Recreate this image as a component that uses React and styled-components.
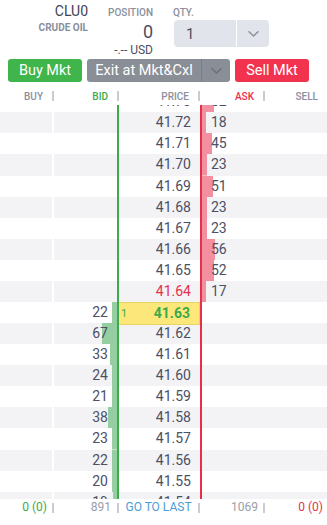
import React from "react";
import styled, { createGlobalStyle } from "styled-components";

const GlobalStyle = createGlobalStyle`
  html, body { margin: 0; padding: 0; background: #fff; }
  body { font-family: Roboto, "Liberation Sans", Arial, sans-serif; -webkit-font-smoothing: antialiased; }
  * { box-sizing: border-box; }
`;

const C = {
  text: "#4b5064",
  label: "#8a8f9d",
  sep: "#c9ccd3",
  rowAlt: "#f3f3f6",
  green: "#3bab4b",
  red: "#e6304b",
  blue: "#4a9ed6",
  bidBar: "#95cea0",
  askBar: "#f2909f",
};

const ROW_H = 21.08;
const BAR_K = 0.225;

const Page = styled.div`
  width: 327px;
  height: 525px;
  overflow: hidden;
  display: flex;
  flex-direction: column;
  background: #fff;
`;

const Top = styled.div`
  display: flex;
  height: 59px;
  flex: none;
`;

const InfoCol = styled.div`
  display: flex;
  flex-direction: column;
  align-items: ${(p) => (p.$left ? "flex-start" : "flex-end")};
  width: ${(p) => p.$w}px;
  margin-left: ${(p) => p.$ml || 0}px;
  padding-top: ${(p) => p.$pt}px;
`;

const Symbol = styled.div`
  font-size: 14px;
  line-height: 16px;
  color: #3e4357;
`;

const SmallLabel = styled.div`
  font-size: 10px;
  line-height: 12px;
  font-weight: ${(p) => p.$weight || 500};
  color: ${C.label};
  margin-top: ${(p) => p.$mt || 0}px;
`;

const PosValue = styled.div`
  font-size: 18px;
  line-height: 20px;
  color: ${C.text};
  margin-top: 3px;
`;

const PosUsd = styled.div`
  font-size: 12px;
  line-height: 14px;
  color: ${C.text};
  margin-top: 1px;
`;

const QtyBox = styled.div`
  display: flex;
  width: 95px;
  height: 27px;
  margin-top: 1px;
  margin-left: 1px;
  border-radius: 4px;
  background: #e1e4ea;
  overflow: hidden;
`;

const QtyValue = styled.div`
  flex: 1;
  display: flex;
  align-items: center;
  padding-left: 12px;
  font-size: 15px;
  color: ${C.text};
  border-right: 1px solid #fff;
`;

const QtyArrow = styled.div`
  width: 32px;
  display: flex;
  align-items: center;
  justify-content: center;
`;

const Buttons = styled.div`
  display: flex;
  gap: 5px;
  padding-left: 8px;
  height: 23px;
  flex: none;
`;

const Btn = styled.div`
  width: ${(p) => p.$w}px;
  height: 23px;
  border-radius: 3px;
  background: ${(p) => p.$bg};
  color: #fff;
  font-size: 14.5px;
  display: flex;
  align-items: center;
  justify-content: center;
`;

const SplitBtn = styled.div`
  width: 143px;
  height: 23px;
  border-radius: 3px;
  background: #8a8e96;
  display: flex;
  overflow: hidden;
`;

const SplitMain = styled.div`
  flex: 1;
  display: flex;
  align-items: center;
  justify-content: center;
  color: #fff;
  font-size: 14.5px;
  border-right: 1px solid #787c84;
`;

const SplitArrow = styled.div`
  width: 28px;
  display: flex;
  align-items: center;
  justify-content: center;
`;

const COLS = "54px 65px 81px 65px 62px";

const Header = styled.div`
  display: grid;
  grid-template-columns: ${COLS};
  height: 18px;
  margin-top: 5px;
  flex: none;
`;

const HeadCell = styled.div`
  display: flex;
  align-items: center;
  justify-content: flex-end;
  font-size: 10px;
  font-weight: 500;
  color: ${(p) => p.$color || C.label};
  padding-right: ${(p) => (p.$last ? 9 : 0)}px;
`;

const Sep = styled.span`
  display: inline-block;
  width: 2px;
  height: 10px;
  background: ${C.sep};
  margin-left: ${(p) => p.$gap}px;
`;

const Book = styled.div`
  height: 394px;
  overflow: hidden;
  flex: none;
`;

const BookInner = styled.div`
  margin-top: -13.8px;
`;

const Row = styled.div`
  display: grid;
  grid-template-columns: ${COLS};
  height: ${ROW_H}px;
  background: ${(p) => (p.$alt ? C.rowAlt : "#fff")};
  font-size: 14px;
  line-height: ${ROW_H}px;
  color: ${C.text};
`;

const BuyCell = styled.div`
  border-right: 2px solid #fff;
`;

const BidCell = styled.div`
  border-right: 2px solid ${C.green};
  text-align: right;
  padding-right: 9px;
  background: linear-gradient(${C.bidBar}, ${C.bidBar}) no-repeat right center /
    ${(p) => p.$bar}px 100%;
`;

const PriceCell = styled.div`
  display: flex;
  align-items: center;
  justify-content: space-between;
  padding-right: 9px;
  padding-left: 2px;
  color: ${(p) => p.$color || C.text};
  font-weight: ${(p) => (p.$bold ? 700 : 400)};
  background: ${(p) => (p.$hl ? "#fce87a" : "transparent")};
  border: ${(p) => (p.$hl ? "1px solid #e8d463" : "none")};
  border-left: none;
`;

const MarkerQty = styled.span`
  font-size: 11px;
  font-weight: 400;
  color: ${C.green};
`;

const AskCell = styled.div`
  border-left: 2px solid ${C.red};
  padding-left: 9px;
  background: linear-gradient(${C.askBar}, ${C.askBar}) no-repeat left center /
    ${(p) => p.$bar}px 100%;
`;

const SellCell = styled.div``;

const Footer = styled.div`
  display: grid;
  grid-template-columns: ${COLS};
  height: 17px;
  flex: none;
  font-size: 12px;
  line-height: 17px;
`;

const FootCell = styled.div`
  display: flex;
  align-items: center;
  justify-content: ${(p) => p.$justify || "flex-end"};
  color: ${(p) => p.$color || "#9a9ea9"};
  padding-right: ${(p) => p.$pr || 0}px;
`;

const FootCenter = styled.span`
  flex: 1;
  text-align: center;
`;

const Chevron = ({ color, w = 11, h = 6 }) => (
  <svg width={w} height={h} viewBox="0 0 11 6" fill="none">
    <path d="M1 0.8 L5.5 5 L10 0.8" stroke={color} strokeWidth="1.5" strokeLinecap="round" strokeLinejoin="round" />
  </svg>
);

const rows = [
  { price: "41.73", ask: 52 },
  { price: "41.72", ask: 18 },
  { price: "41.71", ask: 45 },
  { price: "41.70", ask: 23 },
  { price: "41.69", ask: 51 },
  { price: "41.68", ask: 23 },
  { price: "41.67", ask: 23 },
  { price: "41.66", ask: 56 },
  { price: "41.65", ask: 52 },
  { price: "41.64", ask: 17, red: true },
  { price: "41.63", bid: 22, last: true },
  { price: "41.62", bid: 67 },
  { price: "41.61", bid: 33 },
  { price: "41.60", bid: 24 },
  { price: "41.59", bid: 21 },
  { price: "41.58", bid: 38 },
  { price: "41.57", bid: 23 },
  { price: "41.56", bid: 22 },
  { price: "41.55", bid: 20 },
  { price: "41.54", bid: 19 },
];

export default function App() {
  return (
    <>
      <GlobalStyle />
      <Page>
        <Top>
          <InfoCol $w={88} $pt={3}>
            <Symbol>CLU0</Symbol>
            <SmallLabel $weight={700} $mt={2.5}>CRUDE OIL</SmallLabel>
          </InfoCol>
          <InfoCol $w={65} $pt={7}>
            <SmallLabel>POSITION</SmallLabel>
            <PosValue>0</PosValue>
            <PosUsd>-.-- USD</PosUsd>
          </InfoCol>
          <InfoCol $left $w={100} $ml={20} $pt={7}>
            <SmallLabel>QTY.</SmallLabel>
            <QtyBox>
              <QtyValue>1</QtyValue>
              <QtyArrow>
                <Chevron color="#8d919c" />
              </QtyArrow>
            </QtyBox>
          </InfoCol>
        </Top>

        <Buttons>
          <Btn $w={74} $bg="#3fb54b">Buy Mkt</Btn>
          <SplitBtn>
            <SplitMain>Exit at Mkt&amp;Cxl</SplitMain>
            <SplitArrow>
              <Chevron color="#6c7079" />
            </SplitArrow>
          </SplitBtn>
          <Btn $w={74} $bg="#f2334f">Sell Mkt</Btn>
        </Buttons>

        <Header>
          <HeadCell>BUY<Sep $gap={9} /></HeadCell>
          <HeadCell $color={C.green}>BID<Sep $gap={9} /></HeadCell>
          <HeadCell>PRICE<Sep $gap={9} /></HeadCell>
          <HeadCell $color={C.red}>ASK<Sep $gap={9} /></HeadCell>
          <HeadCell $last>SELL</HeadCell>
        </Header>

        <Book>
          <BookInner>
            {rows.map((r, i) => (
              <Row key={r.price} $alt={i % 2 === 1}>
                <BuyCell />
                <BidCell $bar={r.bid ? Math.round(r.bid * BAR_K) : 0}>{r.bid || ""}</BidCell>
                <PriceCell
                  $hl={r.last}
                  $bold={r.last}
                  $color={r.last ? C.green : r.red ? C.red : undefined}
                >
                  {r.last ? <MarkerQty>1</MarkerQty> : <span />}
                  <span>{r.price}</span>
                </PriceCell>
                <AskCell $bar={r.ask ? Math.round(r.ask * BAR_K) : 0}>{r.ask || ""}</AskCell>
                <SellCell />
              </Row>
            ))}
          </BookInner>
        </Book>

        <Footer>
          <FootCell $color={C.green}>0 (0)<Sep $gap={5} /></FootCell>
          <FootCell>891<Sep $gap={6} /></FootCell>
          <FootCell>
            <FootCenter style={{ color: C.blue }}>GO TO LAST</FootCenter>
            <Sep $gap={0} />
          </FootCell>
          <FootCell>1069<Sep $gap={5} /></FootCell>
          <FootCell $color={C.red} $pr={4}>0 (0)</FootCell>
        </Footer>
      </Page>
    </>
  );
}
